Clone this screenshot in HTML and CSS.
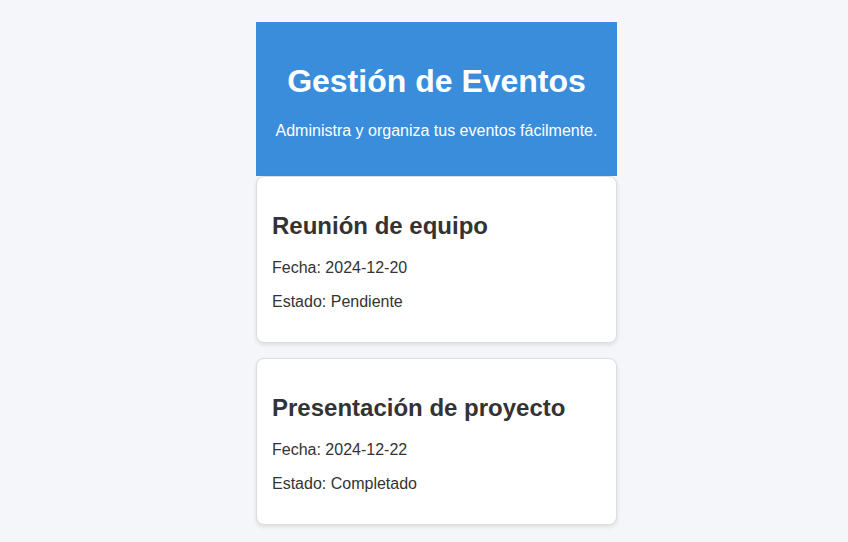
FILE: index.html
```html
<!DOCTYPE html>
<html lang="es">
<head>
<meta charset="utf-8">
<title>Gestión de Eventos</title>
<link rel="stylesheet" href="styles.css">
</head>
<body>
<div class="container">
  <header class="header">
    <h1>Gestión de Eventos</h1>
    <p>Administra y organiza tus eventos fácilmente.</p>
  </header>
  <div class="card">
    <h2>Reunión de equipo</h2>
    <p>Fecha: 2024-12-20</p>
    <p>Estado: Pendiente</p>
  </div>
  <div class="card">
    <h2>Presentación de proyecto</h2>
    <p>Fecha: 2024-12-22</p>
    <p>Estado: Completado</p>
  </div>
</div>
</body>
</html>
```

FILE: styles.css
```css
html, body {
  margin: 0;
  padding: 0;
}
body {
  background: #f4f6fa;
  font-family: "Liberation Sans", Arial, sans-serif;
  color: #333;
  display: flex;
  justify-content: center;
  padding: 22px 0 0 25px;
}
.container {
  width: 361px;
}
.header {
  background: #3a8ddb;
  color: #fff;
  text-align: center;
  padding: 20px 10px;
}
.header h1 {
  font-size: 32px;
  margin: 0.67em 0;
  line-height: 37px;
}
.header p {
  font-size: 16px;
  margin: 16px 0;
}
.card {
  background: #fff;
  border: 1px solid #ddd;
  border-radius: 8px;
  padding: 15px;
  margin-bottom: 15px;
  box-shadow: 0 2px 4px rgba(0, 0, 0, 0.1);
}
.card h2 {
  font-size: 24px;
  margin: 0.83em 0;
  line-height: 27px;
}
.card p {
  font-size: 16px;
  margin: 16px 0;
}
```
